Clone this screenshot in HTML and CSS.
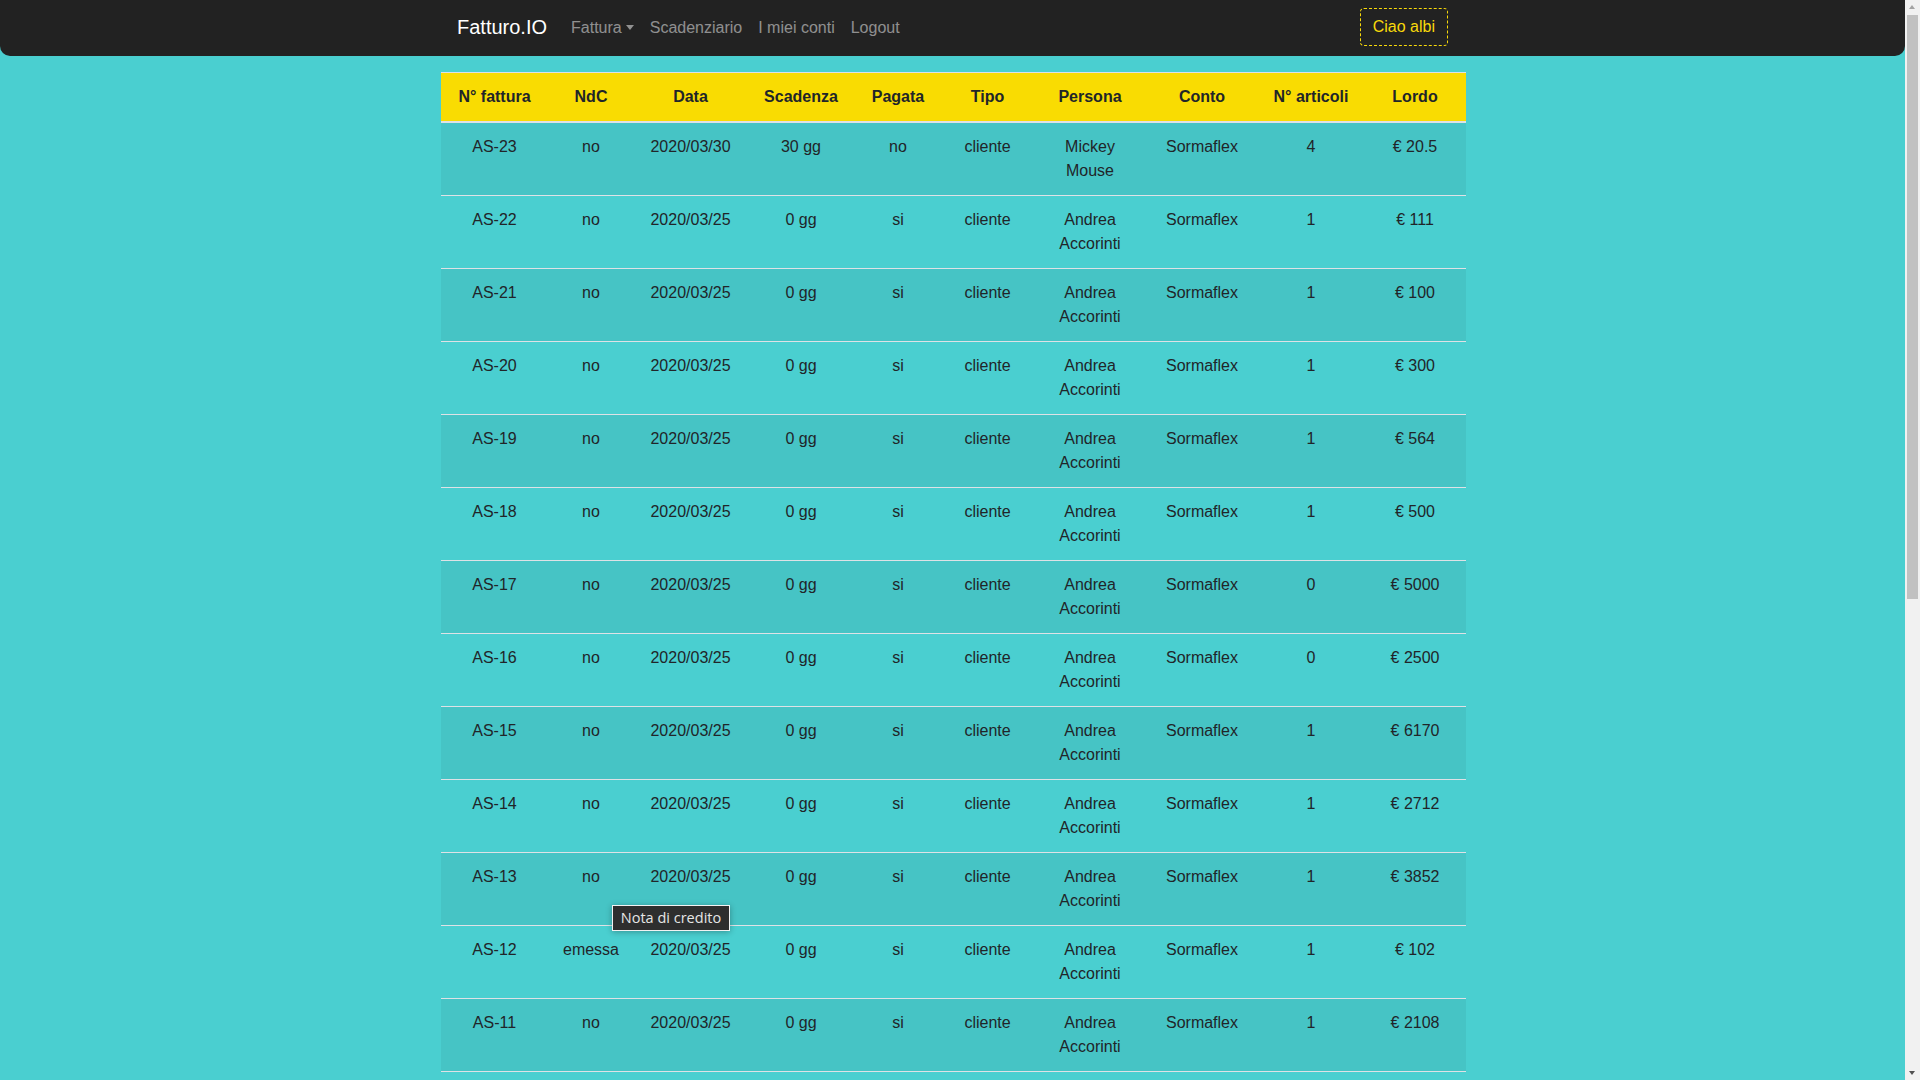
FILE: index.html
```html
<!DOCTYPE html>
<html lang="it">
<head>
<meta charset="utf-8">
<title>Fatturo.IO</title>
<link rel="stylesheet" href="styles.css">
</head>
<body>
<nav class="navbar">
  <div class="nav-inner">
    <a class="brand" href="#">Fatturo.IO</a>
    <ul class="nav-links">
      <li><a class="nav-link dropdown-toggle" href="#">Fattura</a></li>
      <li><a class="nav-link" href="#">Scadenziario</a></li>
      <li><a class="nav-link" href="#">I miei conti</a></li>
      <li><a class="nav-link" href="#">Logout</a></li>
    </ul>
    <button class="btn-user">Ciao albi</button>
  </div>
</nav>
<main class="container">
  <table class="table">
    <colgroup>
      <col class="c1"><col class="c2"><col class="c3"><col class="c4"><col class="c5">
      <col class="c6"><col class="c7"><col class="c8"><col class="c9"><col class="c10">
    </colgroup>
    <thead>
      <tr><th>N° fattura</th><th>NdC</th><th>Data</th><th>Scadenza</th><th>Pagata</th><th>Tipo</th><th>Persona</th><th>Conto</th><th>N° articoli</th><th>Lordo</th></tr>
    </thead>
    <tbody>
      <tr><td>AS-23</td><td>no</td><td>2020/03/30</td><td>30 gg</td><td>no</td><td>cliente</td><td>Mickey Mouse</td><td>Sormaflex</td><td>4</td><td>€ 20.5</td></tr>
      <tr><td>AS-22</td><td>no</td><td>2020/03/25</td><td>0 gg</td><td>si</td><td>cliente</td><td>Andrea Accorinti</td><td>Sormaflex</td><td>1</td><td>€ 111</td></tr>
      <tr><td>AS-21</td><td>no</td><td>2020/03/25</td><td>0 gg</td><td>si</td><td>cliente</td><td>Andrea Accorinti</td><td>Sormaflex</td><td>1</td><td>€ 100</td></tr>
      <tr><td>AS-20</td><td>no</td><td>2020/03/25</td><td>0 gg</td><td>si</td><td>cliente</td><td>Andrea Accorinti</td><td>Sormaflex</td><td>1</td><td>€ 300</td></tr>
      <tr><td>AS-19</td><td>no</td><td>2020/03/25</td><td>0 gg</td><td>si</td><td>cliente</td><td>Andrea Accorinti</td><td>Sormaflex</td><td>1</td><td>€ 564</td></tr>
      <tr><td>AS-18</td><td>no</td><td>2020/03/25</td><td>0 gg</td><td>si</td><td>cliente</td><td>Andrea Accorinti</td><td>Sormaflex</td><td>1</td><td>€ 500</td></tr>
      <tr><td>AS-17</td><td>no</td><td>2020/03/25</td><td>0 gg</td><td>si</td><td>cliente</td><td>Andrea Accorinti</td><td>Sormaflex</td><td>0</td><td>€ 5000</td></tr>
      <tr><td>AS-16</td><td>no</td><td>2020/03/25</td><td>0 gg</td><td>si</td><td>cliente</td><td>Andrea Accorinti</td><td>Sormaflex</td><td>0</td><td>€ 2500</td></tr>
      <tr><td>AS-15</td><td>no</td><td>2020/03/25</td><td>0 gg</td><td>si</td><td>cliente</td><td>Andrea Accorinti</td><td>Sormaflex</td><td>1</td><td>€ 6170</td></tr>
      <tr><td>AS-14</td><td>no</td><td>2020/03/25</td><td>0 gg</td><td>si</td><td>cliente</td><td>Andrea Accorinti</td><td>Sormaflex</td><td>1</td><td>€ 2712</td></tr>
      <tr><td>AS-13</td><td>no</td><td>2020/03/25</td><td>0 gg</td><td>si</td><td>cliente</td><td>Andrea Accorinti</td><td>Sormaflex</td><td>1</td><td>€ 3852</td></tr>
      <tr><td>AS-12</td><td>emessa</td><td>2020/03/25</td><td>0 gg</td><td>si</td><td>cliente</td><td>Andrea Accorinti</td><td>Sormaflex</td><td>1</td><td>€ 102</td></tr>
      <tr><td>AS-11</td><td>no</td><td>2020/03/25</td><td>0 gg</td><td>si</td><td>cliente</td><td>Andrea Accorinti</td><td>Sormaflex</td><td>1</td><td>€ 2108</td></tr>
      <tr><td>AS-10</td><td>no</td><td>2020/03/25</td><td>0 gg</td><td>si</td><td>cliente</td><td>Andrea Accorinti</td><td>Sormaflex</td><td>1</td><td>€ 450</td></tr>
      <tr><td>AS-9</td><td>no</td><td>2020/03/25</td><td>0 gg</td><td>si</td><td>cliente</td><td>Andrea Accorinti</td><td>Sormaflex</td><td>1</td><td>€ 1200</td></tr>
      <tr><td>AS-8</td><td>no</td><td>2020/03/25</td><td>0 gg</td><td>si</td><td>cliente</td><td>Andrea Accorinti</td><td>Sormaflex</td><td>1</td><td>€ 780</td></tr>
      <tr><td>AS-7</td><td>no</td><td>2020/03/25</td><td>0 gg</td><td>si</td><td>cliente</td><td>Andrea Accorinti</td><td>Sormaflex</td><td>1</td><td>€ 960</td></tr>
      <tr><td>AS-6</td><td>no</td><td>2020/03/25</td><td>0 gg</td><td>si</td><td>cliente</td><td>Andrea Accorinti</td><td>Sormaflex</td><td>1</td><td>€ 320</td></tr>
      <tr><td>AS-5</td><td>no</td><td>2020/03/25</td><td>0 gg</td><td>si</td><td>cliente</td><td>Andrea Accorinti</td><td>Sormaflex</td><td>1</td><td>€ 1500</td></tr>
      <tr><td>AS-4</td><td>no</td><td>2020/03/25</td><td>0 gg</td><td>si</td><td>cliente</td><td>Andrea Accorinti</td><td>Sormaflex</td><td>1</td><td>€ 640</td></tr>
      <tr><td>AS-3</td><td>no</td><td>2020/03/25</td><td>0 gg</td><td>si</td><td>cliente</td><td>Andrea Accorinti</td><td>Sormaflex</td><td>1</td><td>€ 210</td></tr>
      <tr><td>AS-2</td><td>no</td><td>2020/03/25</td><td>0 gg</td><td>si</td><td>cliente</td><td>Andrea Accorinti</td><td>Sormaflex</td><td>1</td><td>€ 880</td></tr>
      <tr><td>AS-1</td><td>no</td><td>2020/03/25</td><td>0 gg</td><td>si</td><td>cliente</td><td>Andrea Accorinti</td><td>Sormaflex</td><td>1</td><td>€ 150</td></tr>
    </tbody>
  </table>
</main>
<div class="tooltip">Nota di credito</div>
<div class="scrollbar">
  <span class="arrow-up"></span>
  <span class="thumb"></span>
  <span class="arrow-down"></span>
</div>
</body>
</html>
```

FILE: styles.css
```css
html {
  background: #4acfd0;
}
body {
  margin: 0 15px 0 0;
  background: #4acfd0;
  font-family: "Liberation Sans", Arial, sans-serif;
  font-size: 16px;
  line-height: 1.5;
  color: #212529;
  position: relative;
  padding-bottom: 16px;
}
.navbar {
  background: #222222;
  height: 56px;
  border-radius: 0 0 10px 10px;
}
.nav-inner {
  width: 1027px;
  margin: 0 auto;
  padding: 0 18px 0 18px;
  box-sizing: border-box;
  height: 56px;
  display: flex;
  align-items: center;
}
.brand {
  color: #ffffff;
  font-size: 20px;
  line-height: 30px;
  text-decoration: none;
  margin-right: 16px;
  padding: 3px 0 5px;
}
.nav-links {
  list-style: none;
  margin: 0;
  padding: 0;
  display: flex;
  flex: 1;
}
.nav-link {
  display: block;
  padding: 9px 8px;
  color: rgba(255, 255, 255, 0.5);
  text-decoration: none;
}
.dropdown-toggle::after {
  content: "";
  display: inline-block;
  margin-left: 4px;
  vertical-align: 3px;
  border-top: 5px solid;
  border-left: 4.5px solid transparent;
  border-right: 4.5px solid transparent;
}
.btn-user {
  font-family: "Liberation Sans", Arial, sans-serif;
  font-size: 16px;
  line-height: 24px;
  color: #f8d90a;
  background: transparent;
  border: 1px dashed #f8d90a;
  border-radius: 4px;
  padding: 6px 12px;
  margin-top: -2px;
}
.container {
  width: 1027px;
  box-sizing: border-box;
  padding-left: 2px;
  margin: 16px auto 0;
}
.table {
  width: 1025px;
  border-collapse: collapse;
  table-layout: fixed;
  text-align: center;
}
.c1 { width: 107px; }
.c2 { width: 86px; }
.c3 { width: 113px; }
.c4 { width: 108px; }
.c5 { width: 86px; }
.c6 { width: 93px; }
.c7 { width: 112px; }
.c8 { width: 112px; }
.c9 { width: 106px; }
.c10 { width: 102px; }
.table th {
  background: #f9dc02;
  font-weight: bold;
  padding: 12px;
  border-top: 1px solid #dee2e6;
  border-bottom: 2px solid #dee2e6;
  vertical-align: bottom;
}
.table td {
  padding: 12px;
  border-top: 1px solid #dee2e6;
  vertical-align: top;
}
.table tbody tr:nth-child(odd) {
  background: rgba(0, 0, 0, 0.05);
}
.table tbody tr:last-child td {
  border-bottom: 1px solid #dee2e6;
}
.tooltip {
  position: absolute;
  left: 612px;
  top: 905px;
  width: 118px;
  height: 26px;
  box-sizing: border-box;
  border: 1px solid #f2f2f2;
  background: #2e2e2e;
  color: #e6e6e6;
  font-family: "Open Sans", "DejaVu Sans", sans-serif;
  font-size: 14.5px;
  line-height: 23px;
  text-align: center;
  box-shadow: 0 1px 6px rgba(0, 0, 0, 0.3);
}
.scrollbar {
  position: fixed;
  top: 0;
  right: 0;
  width: 15px;
  height: 100vh;
  background: #f1f1f1;
}
.arrow-up {
  position: absolute;
  top: 5px;
  left: 4px;
  border-bottom: 4px solid #a3a3a3;
  border-left: 3.5px solid transparent;
  border-right: 3.5px solid transparent;
}
.arrow-down {
  position: absolute;
  bottom: 5px;
  left: 4px;
  border-top: 4px solid #505050;
  border-left: 3.5px solid transparent;
  border-right: 3.5px solid transparent;
}
.thumb {
  position: absolute;
  top: 15px;
  left: 2px;
  width: 11px;
  height: 584px;
  background: #c1c1c1;
}
```
